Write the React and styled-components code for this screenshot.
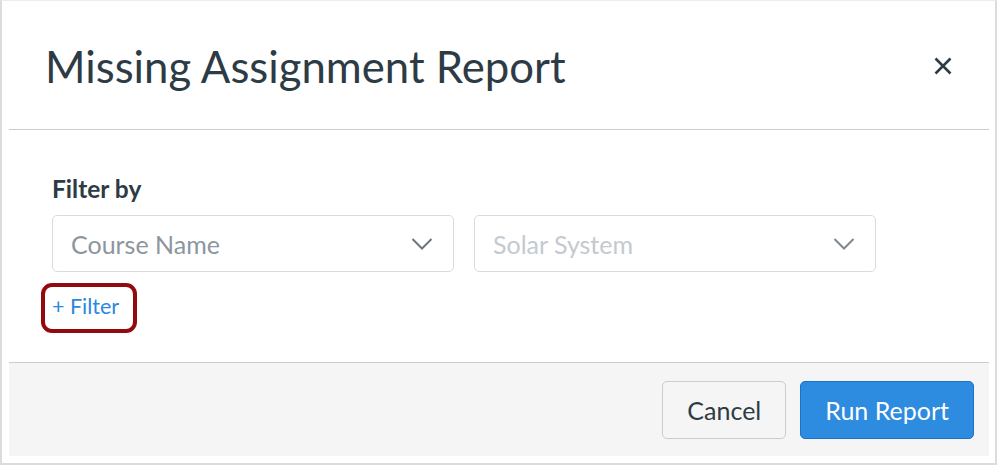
import React from 'react';
import styled, { createGlobalStyle } from 'styled-components';

const GlobalStyle = createGlobalStyle`
  html, body {
    margin: 0;
    padding: 0;
    background: #ffffff;
  }
  body {
    font-family: Lato, "Liberation Sans", sans-serif;
    color: #2d3b45;
  }
`;

const Frame = styled.div`
  box-sizing: border-box;
  width: 997px;
  height: 465px;
  border: 2px solid #dcdcdc;
  border-top: 1px solid #ececec;
  padding: 0 6px 7px 7px;
  display: flex;
`;

const Modal = styled.div`
  flex: 1;
  display: flex;
  flex-direction: column;
  background: #fff;
`;

const Header = styled.header`
  height: 128px;
  display: flex;
  align-items: center;
  justify-content: space-between;
  padding: 0 34px 0 36px;
  border-bottom: 1px solid #c7cdd1;
`;

const Title = styled.h1`
  margin: 0;
  font-size: 43.7px;
  font-weight: 400;
  color: #2d3b45;
  line-height: 1;
  padding-top: 4px;
`;

const CloseButton = styled.button`
  border: 0;
  background: none;
  padding: 0;
  width: 24px;
  height: 24px;
  display: flex;
  align-items: center;
  justify-content: center;
  cursor: pointer;
  margin-top: 2px;
`;

const Body = styled.section`
  flex: 1;
  padding: 44px 43px 0 43px;
`;

const Label = styled.div`
  font-size: 24.5px;
  font-weight: 700;
  line-height: 30px;
  margin-bottom: 11px;
`;

const SelectRow = styled.div`
  display: flex;
  gap: 20px;
`;

const Select = styled.div`
  box-sizing: border-box;
  width: 402px;
  height: 57px;
  border: 1px solid #d7dce0;
  border-radius: 5px;
  display: flex;
  align-items: center;
  justify-content: space-between;
  padding: 0 20px 0 18px;
  font-size: 25px;
  color: ${p => (p.$muted ? '#c3cad0' : '#8b969e')};
`;

const AddFilter = styled.a`
  position: relative;
  display: inline-block;
  margin-top: 20px;
  font-size: 21.5px;
  line-height: 28px;
  color: #2b88dd;
  text-decoration: none;

  &::after {
    content: '';
    position: absolute;
    left: -11px;
    top: -9px;
    width: 88px;
    height: 42px;
    border: 4px solid #930a0e;
    border-radius: 11px;
  }
`;

const Footer = styled.footer`
  height: 93px;
  background: #f5f5f5;
  border-top: 1px solid #c7cdd1;
  display: flex;
  align-items: center;
  justify-content: flex-end;
  gap: 14px;
  padding: 0 15px 0 0;
`;

const Button = styled.button`
  box-sizing: border-box;
  height: 58px;
  padding: 0 24px;
  border-radius: 5px;
  font-family: Lato, "Liberation Sans", sans-serif;
  font-size: 25px;
  cursor: pointer;
  border: 1px solid ${p => (p.$primary ? '#1a73c9' : '#c7cdd1')};
  background: ${p => (p.$primary ? '#2d8be0' : '#f5f5f5')};
  color: ${p => (p.$primary ? '#ffffff' : '#2d3b45')};
`;

const Chevron = ({ color }) => (
  <svg width="22" height="14" viewBox="0 0 22 14" fill="none">
    <path d="M1.5 2 L11 11.5 L20.5 2" stroke={color} strokeWidth="2" />
  </svg>
);

export default function App() {
  return (
    <>
      <GlobalStyle />
      <Frame>
        <Modal>
          <Header>
            <Title>Missing Assignment Report</Title>
            <CloseButton aria-label="Close">
              <svg width="18" height="18" viewBox="0 0 18 18">
                <path d="M1.5 1.5 L16.5 16.5 M16.5 1.5 L1.5 16.5" stroke="#2d3b45" strokeWidth="2.6" />
              </svg>
            </CloseButton>
          </Header>
          <Body>
            <Label>Filter by</Label>
            <SelectRow>
              <Select>
                Course Name
                <Chevron color="#6b7780" />
              </Select>
              <Select $muted>
                Solar System
                <Chevron color="#7d8890" />
              </Select>
            </SelectRow>
            <AddFilter href="#">+ Filter</AddFilter>
          </Body>
          <Footer>
            <Button>Cancel</Button>
            <Button $primary>Run Report</Button>
          </Footer>
        </Modal>
      </Frame>
    </>
  );
}
